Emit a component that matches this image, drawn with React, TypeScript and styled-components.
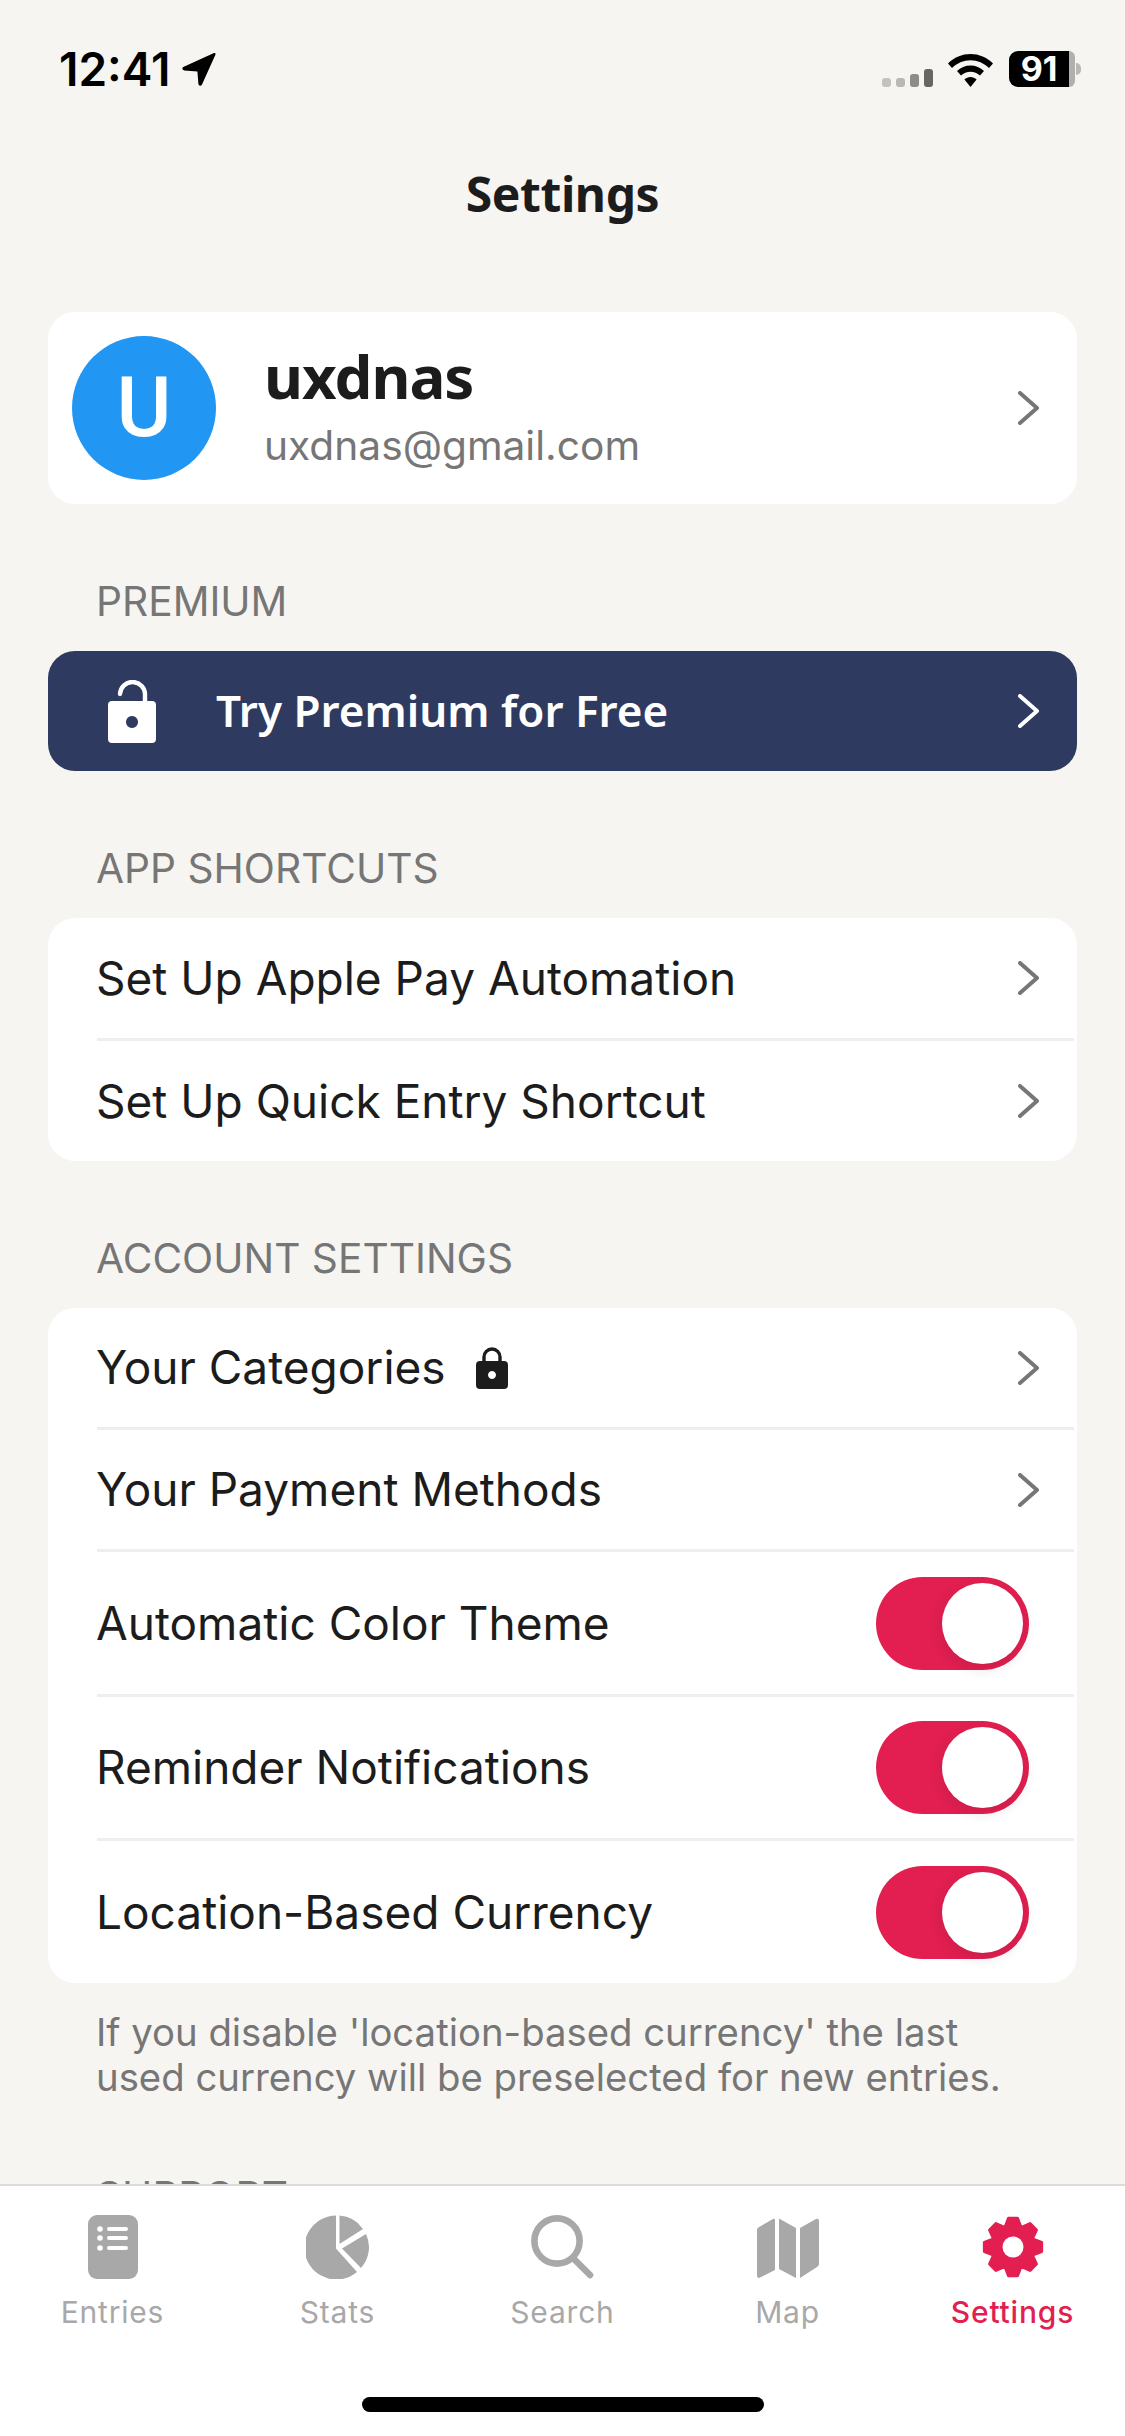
import React from "react";
import styled, { createGlobalStyle } from "styled-components";

const GlobalStyle = createGlobalStyle`
  html, body {
    margin: 0;
    padding: 0;
    background: #f6f5f2;
  }
  * {
    box-sizing: border-box;
  }
`;

const BODY_FONT = `Inter, "Liberation Sans", sans-serif`;
const HEADING_FONT = `"Noto Sans", "Open Sans", sans-serif`;

const gearPath = () => {
  const teeth = 8;
  const step = (2 * Math.PI) / teeth;
  const offsets: [number, number][] = [
    [-0.5, 21],
    [-0.2, 29],
    [0.2, 29],
    [0.5, 21],
  ];
  const points: string[] = [];
  for (let i = 0; i < teeth; i++) {
    const a = i * step - Math.PI / 2;
    offsets.forEach(([o, r]) => {
      const t = a + o * step;
      points.push(`${(32 + r * Math.cos(t)).toFixed(2)} ${(32 + r * Math.sin(t)).toFixed(2)}`);
    });
  }
  return `M${points.join(" L")} Z`;
};

const Chevron = () => (
  <ChevronIcon width="24" height="34" viewBox="0 0 24 34">
    <path d="M3 2 L20 17 L3 32" fill="none" stroke="currentColor" strokeWidth="4" strokeLinecap="round" strokeLinejoin="round" />
  </ChevronIcon>
);

const Row = ({ label, lock, height = 119 }: { label: string; lock?: boolean; height?: number }) => (
  <LinkRow $height={height}>
    <RowLabel>{label}</RowLabel>
    {lock && (
      <SmallLock width="32" height="42" viewBox="0 0 32 42">
        <path d="M8 16 V10 a8 8 0 0 1 16 0 V16" fill="none" stroke="#1c1c1c" strokeWidth="3.4" />
        <path fillRule="evenodd" d="M4 14 H28 a4 4 0 0 1 4 4 V38 a4 4 0 0 1 -4 4 H4 a4 4 0 0 1 -4 -4 V18 a4 4 0 0 1 4 -4 Z M16 24 a4 4 0 1 0 0.01 0 Z" fill="#1c1c1c" />
      </SmallLock>
    )}
    <Chevron />
  </LinkRow>
);

const ToggleItem = ({ label, height }: { label: string; height: number }) => (
  <ToggleRow $height={height}>
    <RowLabel>{label}</RowLabel>
    <Switch>
      <Knob />
    </Switch>
  </ToggleRow>
);

const App: React.FC = () => {
  return (
    <Screen>
      <GlobalStyle />
      <Scroll>
        <StatusBar>
          <TimeGroup>
            <Time>12:41</Time>
            <svg width="34" height="34" viewBox="0 0 34 34">
              <path d="M32 1 C33 0.6 34 1.6 33.4 2.8 L20 32.4 C19 34.4 16.6 34 16.4 31.8 L15.4 19.4 L2.4 18.4 C0 18.2 -0.2 15.6 1.8 14.8 Z" fill="#000" />
            </svg>
          </TimeGroup>
          <StatusIcons>
            <svg width="51" height="18" viewBox="0 0 51 18">
              <rect x="0" y="9" width="9" height="9" rx="3" fill="#c2c2c0" />
              <rect x="14" y="9" width="9" height="9" rx="3" fill="#b8b8b6" />
              <rect x="28" y="5" width="9" height="13" rx="3" fill="#8c8c8a" />
              <rect x="42" y="0" width="9" height="18" rx="3" fill="#666" />
            </svg>
            <svg width="45" height="33" viewBox="0 0 45 33">
              <path d="M22.5 0 C31 0 39 3.4 45 9.4 L41 14 C36 9 29.5 6.2 22.5 6.2 C15.5 6.2 9 9 4 14 L0 9.4 C6 3.4 14 0 22.5 0 Z" fill="#000" />
              <path d="M22.5 11.5 C27.6 11.5 32.4 13.5 36 17 L32 21.6 C29.4 19.2 26 17.8 22.5 17.8 C19 17.8 15.6 19.2 13 21.6 L9 17 C12.6 13.5 17.4 11.5 22.5 11.5 Z" fill="#000" />
              <path d="M22.5 23 C24.8 23 27 23.9 28.6 25.4 L22.5 33 L16.4 25.4 C18 23.9 20.2 23 22.5 23 Z" fill="#000" />
            </svg>
            <Battery>
              <BatteryLevel>91</BatteryLevel>
              <BatteryRest />
              <BatteryTip />
            </Battery>
          </StatusIcons>
        </StatusBar>

        <PageTitle>Settings</PageTitle>

        <ProfileCard>
          <Avatar>U</Avatar>
          <ProfileText>
            <ProfileName>uxdnas</ProfileName>
            <ProfileEmail>uxdnas@gmail.com</ProfileEmail>
          </ProfileText>
          <Chevron />
        </ProfileCard>

        <SectionLabel>PREMIUM</SectionLabel>
        <PremiumBar>
          <svg width="48" height="63" viewBox="0 0 48 63">
            <path d="M12 14 A12.5 12.5 0 0 1 37 15 V24" fill="none" stroke="#fff" strokeWidth="4.4" strokeLinecap="round" />
            <path fillRule="evenodd" d="M4 21 H44 a4 4 0 0 1 4 4 V59 a4 4 0 0 1 -4 4 H4 a4 4 0 0 1 -4 -4 V25 a4 4 0 0 1 4 -4 Z M24 36 a6 6 0 1 0 0.01 0 Z" fill="#fff" />
          </svg>
          <PremiumText>Try Premium for Free</PremiumText>
          <Chevron />
        </PremiumBar>

        <SectionLabel>APP SHORTCUTS</SectionLabel>
        <Card>
          <Row label="Set Up Apple Pay Automation" height={120} />
          <Divider />
          <Row label="Set Up Quick Entry Shortcut" height={120} />
        </Card>

        <SectionLabel>ACCOUNT SETTINGS</SectionLabel>
        <Card>
          <Row label="Your Categories" lock />
          <Divider />
          <Row label="Your Payment Methods" />
          <Divider />
          <ToggleItem label="Automatic Color Theme" height={142} />
          <Divider />
          <ToggleItem label="Reminder Notifications" height={141} />
          <Divider />
          <ToggleItem label="Location-Based Currency" height={142} />
        </Card>
        <FootNote>
          If you disable 'location-based currency' the last
          <br />
          used currency will be preselected for new entries.
        </FootNote>

        <SectionLabel>SUPPORT</SectionLabel>
      </Scroll>

      <TabBar>
        <Tab>
          <svg width="50" height="64" viewBox="0 0 50 64">
            <rect width="50" height="64" rx="9" fill="#a8a8a8" />
            <circle cx="12" cy="14" r="2.8" fill="#fff" />
            <circle cx="12" cy="23" r="2.8" fill="#fff" />
            <circle cx="12" cy="33" r="2.8" fill="#fff" />
            <rect x="19" y="12" width="21" height="4" rx="2" fill="#fff" />
            <rect x="19" y="21" width="21" height="4" rx="2" fill="#fff" />
            <rect x="19" y="31" width="21" height="4" rx="2" fill="#fff" />
          </svg>
          <TabLabel>Entries</TabLabel>
        </Tab>
        <Tab>
          <svg width="64" height="64" viewBox="0 0 64 64">
            <path d="M30 0.5 V33.5 L51 57 A32 32 0 1 1 30 0.5 Z" fill="#a8a8a8" />
            <path d="M33.5 0.5 A31 31 0 0 1 57 14 L33.5 29 Z" fill="#a8a8a8" />
            <path d="M36 33.5 L60 19 A31 31 0 0 1 55 53 Z" fill="#a8a8a8" />
          </svg>
          <TabLabel>Stats</TabLabel>
        </Tab>
        <Tab>
          <svg width="64" height="64" viewBox="0 0 64 64">
            <circle cx="26" cy="26" r="22.6" fill="none" stroke="#a8a8a8" strokeWidth="6.6" />
            <path d="M42 43 L59 60" stroke="#a8a8a8" strokeWidth="6.6" strokeLinecap="round" />
          </svg>
          <TabLabel>Search</TabLabel>
        </Tab>
        <Tab>
          <svg width="64" height="64" viewBox="0 0 64 64">
            <path d="M3 12 L17 4 Q19 3 19 5 V55 L3 63 Q1 63 1 60 V15 Q1 13 3 12 Z" fill="#a8a8a8" />
            <path d="M23 3.5 L40 13 V63 L23 54 Z" fill="#a8a8a8" />
            <path d="M44 13 L60 4 Q63 3 63 6 V49 Q63 51 61 52 L44 63 Z" fill="#a8a8a8" />
          </svg>
          <TabLabel>Map</TabLabel>
        </Tab>
        <Tab>
          <svg width="64" height="64" viewBox="0 0 64 64">
            <path d={gearPath()} fill="#e21f50" stroke="#e21f50" strokeWidth="3" strokeLinejoin="round" />
            <circle cx="32" cy="32" r="10.5" fill="#fff" />
          </svg>
          <TabLabel $active>Settings</TabLabel>
        </Tab>
        <HomeIndicator />
      </TabBar>
    </Screen>
  );
};

const Screen = styled.div`
  width: 1125px;
  height: 2436px;
  display: flex;
  flex-direction: column;
  overflow: hidden;
  background: #f6f5f2;
  font-family: ${BODY_FONT};
`;

const Scroll = styled.main`
  flex: 1;
  min-height: 0;
  overflow: hidden;
  padding: 0 48px;
`;

const StatusBar = styled.div`
  height: 132px;
  display: flex;
  justify-content: space-between;
  align-items: flex-start;
  padding: 46px 0 0 11px;
`;

const TimeGroup = styled.div`
  display: flex;
  align-items: center;
  gap: 12px;
`;

const Time = styled.span`
  font-size: 46px;
  line-height: 46px;
  font-weight: 600;
  color: #000;
`;

const StatusIcons = styled.div`
  display: flex;
  align-items: flex-end;
  gap: 15px;
  margin-right: -4px;
  padding-top: 5px;
`;

const Battery = styled.div`
  display: flex;
  align-items: center;
  height: 36px;
  margin-left: 1px;
`;

const BatteryLevel = styled.div`
  width: 60px;
  height: 36px;
  background: #000;
  border-radius: 9px 0 0 9px;
  color: #fff;
  font-size: 34px;
  font-weight: 700;
  line-height: 36px;
  text-align: center;
`;

const BatteryRest = styled.div`
  width: 6px;
  height: 36px;
  background: #b0b0ae;
  border-radius: 0 9px 9px 0;
`;

const BatteryTip = styled.div`
  width: 5px;
  height: 12px;
  margin-left: 1px;
  background: #b8b8b6;
  border-radius: 0 6px 6px 0;
`;

const PageTitle = styled.h1`
  margin: 0;
  height: 180px;
  padding-top: 31px;
  text-align: center;
  font-family: ${HEADING_FONT};
  font-size: 48px;
  line-height: 62px;
  letter-spacing: -0.4px;
  font-weight: 700;
  color: #1c1c1c;
`;

const ProfileCard = styled.section`
  height: 192px;
  display: flex;
  align-items: center;
  padding: 0 36px 0 24px;
  background: #fff;
  border-radius: 27px;
  color: #767676;
`;

const Avatar = styled.div`
  width: 144px;
  height: 144px;
  flex: none;
  border-radius: 50%;
  background: #2196f3;
  color: #fff;
  font-family: Roboto, sans-serif;
  font-size: 84px;
  font-weight: 500;
  line-height: 144px;
  text-align: center;
`;

const ProfileText = styled.div`
  flex: 1;
  padding-left: 48px;
`;

const ProfileName = styled.div`
  font-family: ${HEADING_FONT};
  font-size: 60px;
  line-height: 72px;
  letter-spacing: -1px;
  font-weight: 700;
  color: #1c1c1c;
  margin-top: -6px;
`;

const ProfileEmail = styled.div`
  font-size: 40.7px;
  line-height: 50px;
  margin-top: 9px;
  color: #767676;
`;

const SectionLabel = styled.h2`
  margin: 0;
  padding: 75px 0 0 48px;
  height: 147px;
  font-size: 40.7px;
  line-height: 46px;
  font-weight: 400;
  color: #767676;
  white-space: nowrap;
`;

const PremiumBar = styled.section`
  height: 120px;
  display: flex;
  align-items: center;
  padding: 0 36px 0 60px;
  background: #2e3a5f;
  border-radius: 27px;
  color: #fff;
`;

const PremiumText = styled.div`
  flex: 1;
  padding-left: 60px;
  font-family: ${HEADING_FONT};
  font-size: 44px;
  font-weight: 600;
  margin-top: -3px;
`;

const Card = styled.section`
  background: #fff;
  border-radius: 27px;
  overflow: hidden;
  color: #767676;
`;

const LinkRow = styled.div<{ $height: number }>`
  height: ${(p) => p.$height}px;
  display: flex;
  align-items: center;
  padding: 0 36px 0 48px;
`;

const ToggleRow = styled.div<{ $height: number }>`
  height: ${(p) => p.$height}px;
  display: flex;
  align-items: center;
  justify-content: space-between;
  padding: 0 48px 0 48px;
`;

const RowLabel = styled.span`
  font-size: 46px;
  line-height: 56px;
  color: #1c1c1c;
  margin-top: -1px;
`;

const ChevronIcon = styled.svg`
  flex: none;
  margin-left: auto;
`;

const SmallLock = styled.svg`
  margin-left: 30px;
`;

const Divider = styled.div`
  height: 3px;
  margin: 0 3px 0 49px;
  background: #eeeeee;
`;

const Switch = styled.div`
  width: 153px;
  height: 93px;
  padding: 6px;
  display: flex;
  justify-content: flex-end;
  border-radius: 47px;
  background: #e21f50;
`;

const Knob = styled.div`
  width: 81px;
  height: 81px;
  border-radius: 50%;
  background: #fff;
  box-shadow: 0 4px 14px rgba(60, 20, 40, 0.14);
`;

const FootNote = styled.p`
  margin: 0 0 -1px;
  padding: 27px 48px 0 48px;
  font-size: 38.3px;
  line-height: 45px;
  color: #767676;
  white-space: nowrap;
`;

const TabBar = styled.nav`
  position: relative;
  height: 252px;
  flex: none;
  display: grid;
  grid-template-columns: repeat(5, 225px);
  background: #fff;
  border-top: 2px solid #dcdcdc;
`;

const Tab = styled.div`
  display: flex;
  flex-direction: column;
  align-items: center;
  padding-top: 29px;
  gap: 15px;
`;

const TabLabel = styled.span<{ $active?: boolean }>`
  font-size: 30px;
  line-height: 36px;
  letter-spacing: 0.8px;
  font-weight: ${(p) => (p.$active ? 500 : 400)};
  color: ${(p) => (p.$active ? "#e21f50" : "#a8a8a8")};
`;

const HomeIndicator = styled.div`
  position: absolute;
  left: 362px;
  bottom: 24px;
  width: 402px;
  height: 15px;
  border-radius: 8px;
  background: #000;
`;

export default App;
